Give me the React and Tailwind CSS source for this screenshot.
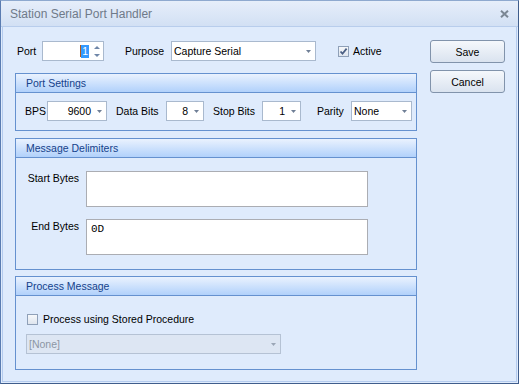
import React from 'react';

const Arrow = ({ color = '#6f7f96' }) => (
  <svg width="5" height="3" viewBox="0 0 5 3" className="shrink-0">
    <path d="M0 0h5L2.5 3z" fill={color} />
  </svg>
);

function Combo({ className, value, align = 'right' }) {
  return (
    <div className={`h-[20px] border border-[#a9b9ce] bg-white flex items-center pl-[2px] pr-[4px] ${className}`}>
      <span className={`flex-1 leading-none ${align === 'right' ? 'text-right' : 'text-left'}`}>{value}</span>
      <span className="ml-[6px] flex items-center">
        <Arrow />
      </span>
    </div>
  );
}

function CheckBox({ checked }) {
  return (
    <div className="w-[11px] h-[11px] border border-[#8fa0b8] bg-gradient-to-b from-[#f6f8fb] to-[#dfe5ee] flex items-center justify-center shrink-0">
      {checked && (
        <svg width="9" height="9" viewBox="0 0 9 9">
          <path d="M1.5 4.5l2 2.2L7.6 1.6" stroke="#4b5f84" strokeWidth="1.8" fill="none" />
        </svg>
      )}
    </div>
  );
}

function Group({ title, className, children }) {
  return (
    <div className={`border border-[#6591cf] flex flex-col ${className}`}>
      <div className="h-[19px] border-b border-[#6591cf] bg-gradient-to-b from-[#eaf2fe] to-[#b1d1fb] flex items-center pl-[10px] text-[#15428b]">
        {title}
      </div>
      {children}
    </div>
  );
}

function Button({ children, className }) {
  return (
    <div className={`w-[75px] h-[23px] rounded-[3px] border border-[#8193ab] bg-gradient-to-b from-[#f5f8fc] to-[#dae3ef] flex items-center justify-center ${className}`}>
      {children}
    </div>
  );
}

export default function App() {
  return (
    <div className="w-[519px] h-[384px] flex flex-col bg-[#dfebfc] border border-[#5a7cb1] border-r-[#3f5d8c] border-b-[#3f5d8c] border-t-[#8ea9cf] font-['Liberation_Sans',Arial,sans-serif] text-[10.5px] text-black leading-[12px]">
      <div className="h-[26px] flex items-center justify-between pl-[9px] pr-[9px] bg-gradient-to-b from-[#e6eefa] to-[#d2e0f4] border-b border-[#b8cdec] shrink-0">
        <span className="text-[12px] text-[#6f7a89]">Station Serial Port Handler</span>
        <svg width="9" height="8" viewBox="0 0 9 8">
          <path d="M1 0.8l7 6.4M8 0.8l-7 6.4" stroke="#7b8794" strokeWidth="2" />
        </svg>
      </div>

      <div className="flex-1 mx-[1px] mb-[1px] border-x border-b border-[#b4cbee] flex pl-[12px] pt-[13px]">
        <div className="w-[402px] flex flex-col">
          <div className="h-[20px] mt-[1px] flex items-center">
            <span className="w-[27px] pl-[2px]">Port</span>
            <div className="w-[62px] h-[20px] border border-[#a9b9ce] bg-white flex items-center justify-end pr-[3px]">
              <span className="w-[1px] h-[12px] bg-[#b25a1f]" />
              <span className="bg-[#3399ff] text-white px-[1px] leading-[13px]">1</span>
              <div className="ml-[4px] w-[7px] flex flex-col items-center gap-[5px]">
                <svg width="6" height="3" viewBox="0 0 6 3"><path d="M0 3h6L3 0z" fill="#6f86a8" /></svg>
                <svg width="6" height="3" viewBox="0 0 6 3"><path d="M0 0h6L3 3z" fill="#6f86a8" /></svg>
              </div>
            </div>
            <span className="ml-[21px] w-[46px]">Purpose</span>
            <Combo className="w-[145px]" value="Capture Serial" align="left" />
            <div className="ml-[22px]">
              <CheckBox checked />
            </div>
            <span className="ml-[4px]">Active</span>
          </div>

          <Group title="Port Settings" className="mt-[12px] h-[58px]">
            <div className="flex items-center pt-[8px] pl-[9px]">
              <span className="w-[22px]">BPS</span>
              <Combo className="w-[60px]" value="9600" />
              <span className="ml-[9px] w-[50px]">Data Bits</span>
              <Combo className="w-[38px]" value="8" />
              <span className="ml-[9px] w-[49px]">Stop Bits</span>
              <Combo className="w-[39px]" value="1" />
              <span className="ml-[16px] w-[34px]">Parity</span>
              <Combo className="w-[61px]" value="None" align="left" />
            </div>
          </Group>

          <Group title="Message Delimiters" className="mt-[7px] h-[132px]">
            <div className="flex flex-col pt-[13px] gap-[12px]">
              <div className="flex">
                <span className="w-[70px] text-right pr-[7px] pt-[1px]">Start Bytes</span>
                <div className="w-[282px] h-[36px] border border-[#abadb3] bg-white" />
              </div>
              <div className="flex">
                <span className="w-[70px] text-right pr-[7px] pt-[1px]">End Bytes</span>
                <div className="w-[282px] h-[36px] border border-[#abadb3] bg-white pl-[4px] pt-[3px] font-['Liberation_Mono',monospace] text-[11px]">
                  0D
                </div>
              </div>
            </div>
          </Group>

          <Group title="Process Message" className="mt-[6px] h-[94px]">
            <div className="flex flex-col pt-[17px] pl-[11px]">
              <div className="flex items-center">
                <CheckBox />
                <span className="ml-[5px]">Process using Stored Procedure</span>
              </div>
              <div className="mt-[9px] -ml-[1px] w-[255px] h-[20px] border border-[#b5c2d4] bg-[#dde6f3] flex items-center pl-[2px] pr-[4px] text-[#8c96a4]">
                <span className="flex-1">[None]</span>
                <Arrow color="#9aa6b6" />
              </div>
            </div>
          </Group>
        </div>

        <div className="ml-[13px] flex flex-col gap-[7px]">
          <Button>Save</Button>
          <Button>Cancel</Button>
        </div>
      </div>
    </div>
  );
}
